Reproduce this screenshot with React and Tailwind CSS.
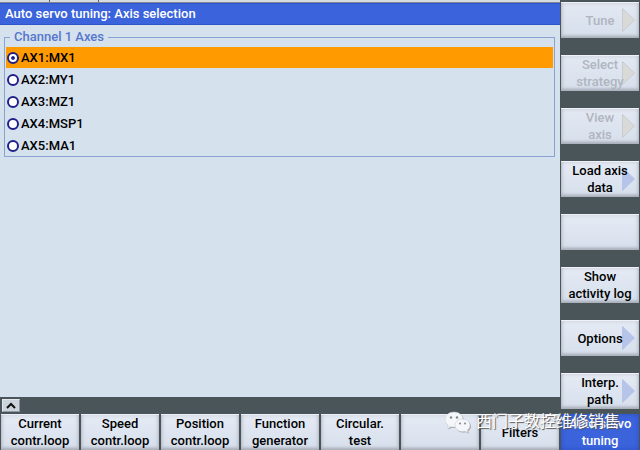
const axes = ["AX1:MX1", "AX2:MY1", "AX3:MZ1", "AX4:MSP1", "AX5:MA1"];

const sideKeys = [
  { lines: ["Tune"], arrow: true, disabled: true },
  { lines: ["Select", "strategy"], arrow: true, disabled: true },
  { lines: ["View", "axis"], arrow: true, disabled: true },
  { lines: ["Load axis", "data"], arrow: true },
  { lines: [] },
  { lines: ["Show", "activity log"] },
  { lines: ["Options"], arrow: true },
  { lines: ["Interp.", "path"], arrow: true },
];

const bottomKeys = [
  { lines: ["Current", "contr.loop"] },
  { lines: ["Speed", "contr.loop"] },
  { lines: ["Position", "contr.loop"] },
  { lines: ["Function", "generator"] },
  { lines: ["Circular.", "test"] },
  { lines: [] },
  { lines: ["Filters"] },
  { lines: ["Auto servo", "tuning"], active: true },
];

const keyColors = {
  normal:
    "text-black bg-linear-to-b from-[#e6ebf5] to-[#d5dfeb] shadow-[inset_0_1px_0_#eef2f8,inset_0_-2px_3px_#a9aeb8,inset_0_0_5px_#b6bbc6]",
  disabled:
    "text-[#b0b5c0] bg-linear-to-b from-[#e4e9f3] to-[#d5dfeb] shadow-[inset_0_1px_0_#eef2f8,inset_0_-2px_3px_#a9aeb8,inset_0_0_5px_#b6bbc6]",
  active:
    "text-white bg-[#3a63dc] shadow-[inset_0_0_5px_#2a4dc4]",
};

const SoftKey = ({ lines, arrow, disabled, active }) => {
  const colors = active
    ? keyColors.active
    : disabled
      ? keyColors.disabled
      : keyColors.normal;

  return (
    <button
      type="button"
      disabled={disabled}
      aria-label={lines.length ? undefined : "Empty softkey"}
      className={`relative h-9 w-full text-center text-[13px]/[17px] font-medium whitespace-nowrap ${colors}`}
    >
      {arrow && (
        <svg
          viewBox="0 0 13 24"
          className="absolute top-1.5 right-1 h-6 w-[13px]"
          aria-hidden="true"
        >
          <path
            d="M0.5 0.5 L12.500 12 L0.500 23.500 Z"
            fill={disabled ? "#d9d9d8" : "#b5c4e8"}
            stroke={disabled ? "#c8cbd0" : "#b5c4e8"}
          />
        </svg>
      )}
      <span className="relative flex flex-col items-center">
        {lines.map((line) => (
          <span key={line}>{line}</span>
        ))}
      </span>
    </button>
  );
};

const AxisList = () => (
  <fieldset className="mr-[5px] ml-1 border border-[#8aa2cf] px-px">
    <legend className="ml-1 px-1 text-[13px]/4 font-medium text-[#5577cc]">
      Channel 1 Axes
    </legend>
    <div className="flex flex-col gap-px pt-0.5">
      {axes.map((axis, i) => (
        <label
          key={axis}
          className="flex h-[21px] items-center gap-0.5 pl-px text-[13px] font-medium text-black has-checked:bg-[#ff9a00]"
        >
          <input
            type="radio"
            name="axis"
            value={axis}
            defaultChecked={i === 0}
            className="size-3 appearance-none rounded-full border-2 border-[#20208a] bg-white checked:bg-radial checked:from-[#20208a] checked:from-25% checked:to-white checked:to-40%"
          />
          {axis}
        </label>
      ))}
    </div>
  </fieldset>
);

const Watermark = () => (
  <div className="pointer-events-none absolute right-5 bottom-4 flex items-center gap-1">
    <svg viewBox="0 0 28 24" className="h-6 w-7" aria-hidden="true">
      <g fill="#a4a9b0" transform="translate(1 1)">
        <path d="M10 2C4.800 2 1 5.400 1 9.500c0 2.400 1.200 4.400 3.200 5.800L3.400 18.500l3.300-1.800c1 .3 2.100.4 3.300.4 5 0 9-3.300 9-7.600S15 2 10 2Z" />
        <path d="M18.500 9c-4.300 0-7.500 2.800-7.500 6.300s3.200 6.300 7.500 6.300c.9 0 1.800-.1 2.600-.4l2.900 1.600-.8-2.600c1.700-1.200 2.800-2.900 2.800-4.900C26 11.800 22.800 9 18.500 9Z" />
      </g>
      <g fill="#f4f6f9" stroke="#c3c8cf" strokeWidth="0.5">
        <path d="M10 2C4.800 2 1 5.400 1 9.500c0 2.400 1.200 4.400 3.200 5.800L3.400 18.500l3.300-1.800c1 .3 2.100.4 3.300.4 5 0 9-3.300 9-7.600S15 2 10 2Z" />
        <path d="M18.500 9c-4.300 0-7.500 2.800-7.500 6.300s3.200 6.300 7.500 6.300c.9 0 1.800-.1 2.600-.4l2.900 1.600-.8-2.600c1.700-1.200 2.800-2.900 2.800-4.900C26 11.800 22.800 9 18.500 9Z" />
      </g>
      <g fill="#7f868e">
        <circle cx="7" cy="7.500" r="1.200" />
        <circle cx="13" cy="7.500" r="1.200" />
        <circle cx="16" cy="13.500" r="1" />
        <circle cx="21" cy="13.500" r="1" />
      </g>
    </svg>
    <span className="font-['Liberation_Sans','Noto_Sans_CJK_SC',sans-serif] text-base/6 text-white text-shadow-[1px_1px_1px_#555]">
      西门子数控维修销售
    </span>
  </div>
);

const App = () => {
  return (
    <div className="relative flex min-h-screen flex-col bg-[#4a5559] font-[Roboto,'Liberation_Sans',sans-serif]">
      <div className="flex flex-1">
        <main className="flex flex-1 flex-col">
          <div className="flex flex-1 flex-col bg-[#d6e1ee]">
            <div className="flex h-[3px] border-b border-[#7d8795] bg-[#d6dbe2]">
              <span className="w-[50px] border-r border-[#59636d]" />
              <span className="w-[49px] border-r border-[#59636d]" />
            </div>
            <h1 className="mb-1 border-y border-[#2f55cb] bg-[#3a63dc] px-[5px] text-[13px]/5 font-medium text-white">
              Auto servo tuning: Axis selection
            </h1>
            <AxisList />
          </div>
          <div className="flex h-[17px] items-center px-0.5">
            <button
              type="button"
              aria-label="Back"
              className="flex h-[13px] w-[18px] items-center justify-center border border-t-[#e4e8ee] border-r-[#8f979f] border-b-[#8f979f] border-l-[#e4e8ee] bg-[#cdd3da]"
            >
              <svg viewBox="0 0 10 7" className="h-[7px] w-2.5" aria-hidden="true">
                <path d="M1 6 L5 2 L9 6" fill="none" stroke="#111" strokeWidth="2" />
              </svg>
            </button>
          </div>
        </main>

        <nav
          aria-label="Vertical softkeys"
          className="flex w-20 flex-col gap-[17px] px-px pt-0.5 pb-[5px]"
        >
          {sideKeys.map((item, i) => (
            <SoftKey key={i} {...item} />
          ))}
        </nav>
      </div>

      <nav
        aria-label="Horizontal softkeys"
        className="grid grid-cols-8 gap-0.5 px-px"
      >
        {bottomKeys.map((item, i) => (
          <SoftKey key={i} {...item} />
        ))}
      </nav>

      <Watermark />
    </div>
  );
};

export default App;
